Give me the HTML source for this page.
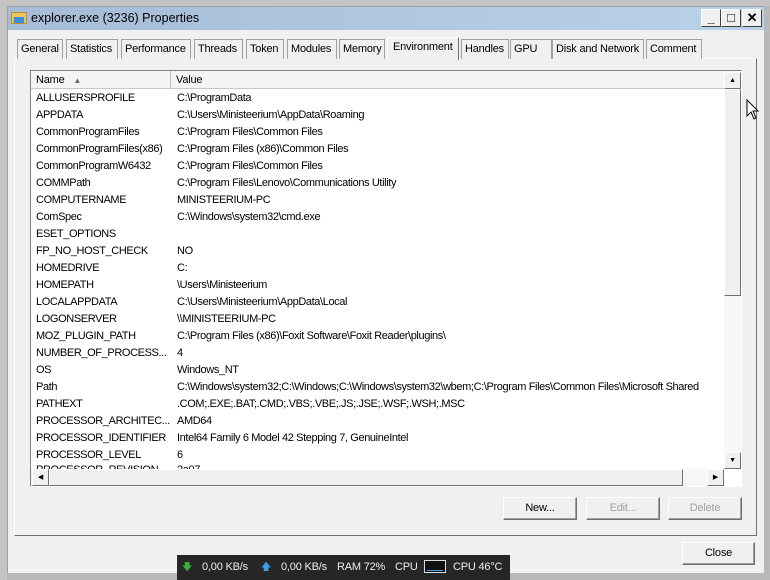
<!DOCTYPE html><html><head><style>
*{margin:0;padding:0;box-sizing:border-box}
body{width:770px;height:580px;background:#c4c4c4;position:relative;overflow:hidden;font-family:"Liberation Sans",Tahoma,sans-serif;font-size:11px;color:#000;letter-spacing:-0.2px}
.abs{position:absolute;white-space:nowrap}
.win{left:7px;top:6px;width:757px;height:567px;background:#f0f0f0;border-left:1px solid #a0a0a0;border-top:1px solid #a0a0a0}
.title{left:8px;top:7px;width:756px;height:23px;background:linear-gradient(90deg,#a7bcd6,#b9d1ea)}
.tb{top:9px;width:20px;height:18px;background:#f0f0f0;border:1px solid;border-color:#fff #404040 #404040 #fff;font-weight:bold;text-align:center;font-size:13px;line-height:16px}
.tab{top:39px;height:20px;border:1px solid #a0a0a0;border-bottom:none;background:#f0f0f0;line-height:18px;padding-left:3px;font-size:11px;overflow:hidden}
.panel{left:14px;top:58px;width:743px;height:478px;border:1px solid;border-color:#fff #707070 #707070 #fff;background:#f0f0f0}
.list{left:30px;top:70px;width:712px;height:417px;border:1px solid;border-color:#808080 #fff #fff #808080;background:#fff}
.row{position:absolute;left:5px;height:17px;line-height:17px;white-space:nowrap;font-size:11px;letter-spacing:-0.38px}
.v{position:absolute;left:141px;white-space:nowrap}
.btn{height:23px;border:1px solid;border-color:#fff #707070 #707070 #fff;background:#f0f0f0;text-align:center;line-height:21px;font-size:11px;box-shadow:inset -1px -1px #a0a0a0}
.sb{background:#f0f0f0;border:1px solid;border-color:#fff #707070 #707070 #fff}
</style></head><body>
<div class="abs win"></div>
<div class="abs title"></div>
<div class="abs" style="left:11px;top:12px;width:16px;height:12px;background:#e8c560;border:1px solid #b89030"></div>
<div class="abs" style="left:14px;top:17px;width:10px;height:6px;background:#3a8fd8"></div>
<div class="abs" style="left:31px;top:11px;font-size:12.5px;letter-spacing:0">explorer.exe (3236) Properties</div>
<div class="abs tb" style="left:701px">_</div>
<div class="abs tb" style="left:721px">□</div>
<div class="abs tb" style="left:742px">✕</div>
<div class="abs panel"></div>
<div class="abs tab" style="left:17px;width:46px">General</div>
<div class="abs tab" style="left:66px;width:52px">Statistics</div>
<div class="abs tab" style="left:121px;width:70px">Performance</div>
<div class="abs tab" style="left:194px;width:49px">Threads</div>
<div class="abs tab" style="left:246px;width:38px">Token</div>
<div class="abs tab" style="left:287px;width:50px">Modules</div>
<div class="abs tab" style="left:339px;width:46px">Memory</div>
<div class="abs tab" style="left:387px;top:37px;height:23px;width:72px;border-color:#fff #707070 #fff #fff;padding-left:5px;z-index:2">Environment</div>
<div class="abs tab" style="left:461px;width:48px">Handles</div>
<div class="abs tab" style="left:510px;width:42px">GPU</div>
<div class="abs tab" style="left:552px;width:92px">Disk and Network</div>
<div class="abs tab" style="left:646px;width:56px">Comment</div>
<div class="abs list">
<div class="abs" style="left:0;top:0;width:693px;height:18px;background:#f5f5f5;border-bottom:1px solid #c8c8c8"></div>
<div class="abs" style="left:139px;top:0;width:1px;height:18px;background:#bbb"></div>
<div class="abs" style="left:5px;top:3px">Name <span style="font-size:8px;color:#666;margin-left:6px">▲</span></div>
<div class="abs" style="left:145px;top:3px">Value</div>
<div class="abs" style="left:0;top:19px;width:693px;height:379px;overflow:hidden">
<div style="position:relative">
<div class="row" style="top:0">ALLUSERSPROFILE<span class="v">C:\ProgramData</span></div>
<div class="row" style="top:17px">APPDATA<span class="v">C:\Users\Ministeerium\AppData\Roaming</span></div>
<div class="row" style="top:34px">CommonProgramFiles<span class="v">C:\Program Files\Common Files</span></div>
<div class="row" style="top:51px">CommonProgramFiles(x86)<span class="v">C:\Program Files (x86)\Common Files</span></div>
<div class="row" style="top:68px">CommonProgramW6432<span class="v">C:\Program Files\Common Files</span></div>
<div class="row" style="top:85px">COMMPath<span class="v">C:\Program Files\Lenovo\Communications Utility</span></div>
<div class="row" style="top:102px">COMPUTERNAME<span class="v">MINISTEERIUM-PC</span></div>
<div class="row" style="top:119px">ComSpec<span class="v">C:\Windows\system32\cmd.exe</span></div>
<div class="row" style="top:136px">ESET_OPTIONS<span class="v"></span></div>
<div class="row" style="top:153px">FP_NO_HOST_CHECK<span class="v">NO</span></div>
<div class="row" style="top:170px">HOMEDRIVE<span class="v">C:</span></div>
<div class="row" style="top:187px">HOMEPATH<span class="v">\Users\Ministeerium</span></div>
<div class="row" style="top:204px">LOCALAPPDATA<span class="v">C:\Users\Ministeerium\AppData\Local</span></div>
<div class="row" style="top:221px">LOGONSERVER<span class="v">\\MINISTEERIUM-PC</span></div>
<div class="row" style="top:238px">MOZ_PLUGIN_PATH<span class="v">C:\Program Files (x86)\Foxit Software\Foxit Reader\plugins\</span></div>
<div class="row" style="top:255px">NUMBER_OF_PROCESS...<span class="v">4</span></div>
<div class="row" style="top:272px">OS<span class="v">Windows_NT</span></div>
<div class="row" style="top:289px">Path<span class="v">C:\Windows\system32;C:\Windows;C:\Windows\system32\wbem;C:\Program Files\Common Files\Microsoft Shared</span></div>
<div class="row" style="top:306px">PATHEXT<span class="v">.COM;.EXE;.BAT;.CMD;.VBS;.VBE;.JS;.JSE;.WSF;.WSH;.MSC</span></div>
<div class="row" style="top:323px">PROCESSOR_ARCHITEC...<span class="v">AMD64</span></div>
<div class="row" style="top:340px">PROCESSOR_IDENTIFIER<span class="v">Intel64 Family 6 Model 42 Stepping 7, GenuineIntel</span></div>
<div class="row" style="top:357px">PROCESSOR_LEVEL<span class="v">6</span></div>
<div class="row" style="top:372px">PROCESSOR_REVISION<span class="v">2a07</span></div>
</div></div>
<div class="abs" style="left:693px;top:0;width:17px;height:398px;background:repeating-conic-gradient(#f0f0f0 0 25%,#fff 0 50%) 0 0/2px 2px"></div>
<div class="abs sb" style="left:693px;top:1px;width:17px;height:17px;text-align:center;font-size:7px;line-height:15px">▲</div>
<div class="abs sb" style="left:693px;top:18px;width:17px;height:207px"></div>
<div class="abs sb" style="left:693px;top:381px;width:17px;height:17px;text-align:center;font-size:7px;line-height:15px">▼</div>
<div class="abs" style="left:0;top:398px;width:693px;height:17px;background:#f0f0f0"></div>
<div class="abs sb" style="left:1px;top:398px;width:17px;height:17px;text-align:center;font-size:7px;line-height:15px">◀</div>
<div class="abs sb" style="left:18px;top:398px;width:634px;height:17px"></div>
<div class="abs" style="left:652px;top:398px;width:25px;height:17px;background:repeating-conic-gradient(#f0f0f0 0 25%,#fff 0 50%) 0 0/2px 2px"></div>
<div class="abs sb" style="left:676px;top:398px;width:17px;height:17px;text-align:center;font-size:7px;line-height:15px">▶</div>
</div>
<div class="abs btn" style="left:503px;top:497px;width:74px">New...</div>
<div class="abs btn" style="left:586px;top:497px;width:74px;color:#a0a0a0">Edit...</div>
<div class="abs btn" style="left:668px;top:497px;width:74px;color:#a0a0a0">Delete</div>
<div class="abs btn" style="left:682px;top:542px;width:73px">Close</div>
<div class="abs" style="left:7px;top:573px;width:763px;height:7px;background:#b8b8b8"></div>
<div class="abs" style="left:764px;top:6px;width:6px;height:574px;background:#b8b8b8"></div>
<div class="abs" style="left:177px;top:555px;width:333px;height:25px;background:#262626;color:#eee;font-size:11px">
<span class="abs" style="left:5px;top:5px;color:#3cb03c;font-size:10px">🡇</span>
<span class="abs" style="left:25px;top:6px">0,00 KB/s</span>
<span class="abs" style="left:84px;top:5px;color:#3a9fe8;font-size:10px">🡅</span>
<span class="abs" style="left:104px;top:6px">0,00 KB/s</span>
<span class="abs" style="left:160px;top:6px">RAM 72%</span>
<span class="abs" style="left:218px;top:6px">CPU</span>
<span class="abs" style="left:247px;top:5px;width:22px;height:13px;border:1px solid #ddd;background:#111"><span class="abs" style="left:2px;bottom:1px;width:16px;height:1px;background:#3a9fe8"></span></span>
<span class="abs" style="left:276px;top:6px">CPU 46°C</span>
</div>
<svg class="abs" style="left:746px;top:99px" width="14" height="22" viewBox="0 0 14 22"><path d="M1 1 L1 17 L5 13 L8 20 L10 19 L7 12 L12 12 Z" fill="#fff" stroke="#000"/></svg>
</body></html>
